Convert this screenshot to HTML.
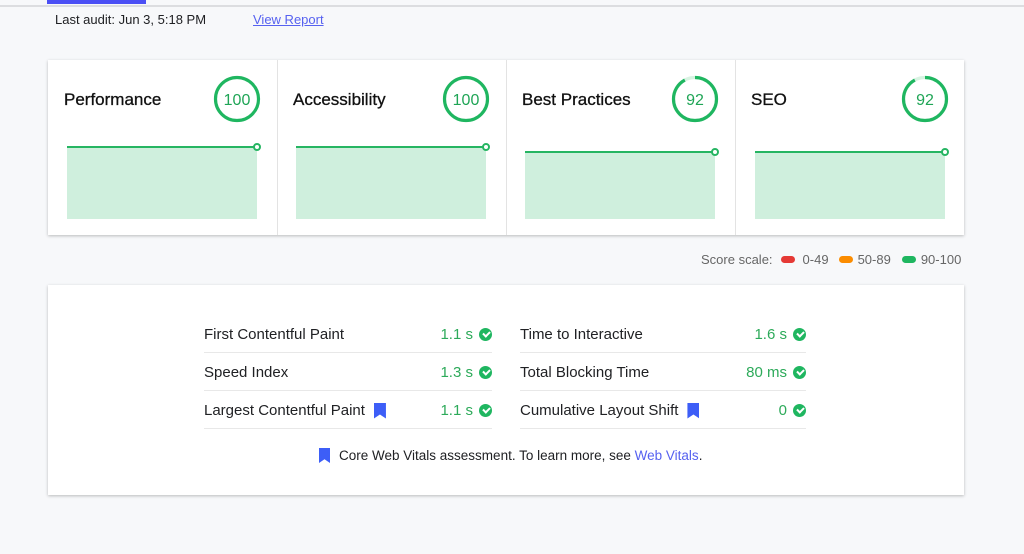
<!DOCTYPE html>
<html><head><style>
*{margin:0;padding:0;box-sizing:border-box}
body{width:1024px;height:554px;background:#f7f8fa;font-family:"Liberation Sans",sans-serif;position:relative;overflow:hidden;color:#202124}
.abs{position:absolute}
.card{background:#fff;box-shadow:0 1px 3px rgba(0,0,0,.25)}
.t{font-size:17px;color:#111;-webkit-text-stroke:0.3px #111}
.row{position:absolute;height:38px;border-bottom:1px solid #e8e8e8;font-size:15px;display:flex;align-items:center;padding-top:2px}
.row .v{margin-left:auto;color:#2daa5a;display:flex;align-items:center;gap:6px}
.ck{width:13px;height:13px;border-radius:50%;background:#1fb660;display:inline-block;position:relative}
.ck:after{content:"";position:absolute;left:3.5px;top:3px;width:5px;height:3px;border-left:2px solid #fff;border-bottom:2px solid #fff;transform:rotate(-45deg)}
.bm{display:inline-block;width:12px;height:16px;background:#3d5ef7;clip-path:polygon(0 0,100% 0,100% 100%,50% 75%,0 100%);margin-left:9px}
</style></head><body>
<div class="abs" style="left:0;top:5px;width:1024px;height:2px;background:#dcdde0"></div>
<div class="abs" style="left:47px;top:0;width:99px;height:4px;background:#4b4ff5"></div>
<div class="abs" style="left:55px;top:12px;font-size:13px">Last audit: Jun 3, 5:18 PM</div>
<div class="abs" style="left:253px;top:12px;font-size:13px;color:#5661f0;text-decoration:underline">View Report</div>

<div class="abs card" style="left:48px;top:60px;width:916px;height:175px"></div>
<div class="abs" style="left:277px;top:60px;width:1px;height:175px;background:#e3e3e3"></div>
<div class="abs" style="left:506px;top:60px;width:1px;height:175px;background:#e3e3e3"></div>
<div class="abs" style="left:735px;top:60px;width:1px;height:175px;background:#e3e3e3"></div>

<div class="abs t" style="left:64px;top:90px">Performance</div>
<div class="abs t" style="left:293px;top:90px">Accessibility</div>
<div class="abs t" style="left:522px;top:90px">Best Practices</div>
<div class="abs t" style="left:751px;top:90px">SEO</div>

<svg class="abs" style="left:0;top:0" width="1024" height="240">
<g fill="none" stroke-width="3.2">
<circle cx="237" cy="99" r="21.5" stroke="#1fb660"/>
<circle cx="466" cy="99" r="21.5" stroke="#1fb660"/>
<circle cx="695" cy="99" r="21.5" stroke="#d8f3e2"/>
<circle cx="695" cy="99" r="21.5" stroke="#1fb660" stroke-dasharray="124.3 135.1" transform="rotate(-90 695 99)"/>
<circle cx="925" cy="99" r="21.5" stroke="#d8f3e2"/>
<circle cx="925" cy="99" r="21.5" stroke="#1fb660" stroke-dasharray="124.3 135.1" transform="rotate(-90 925 99)"/>
</g>
<g font-family="Liberation Sans" font-size="16" fill="#1fa556" text-anchor="middle">
<text x="237" y="105">100</text><text x="466" y="105">100</text><text x="695" y="105">92</text><text x="925" y="105">92</text>
</g>
<g fill="#cfefdd">
<rect x="67" y="147" width="190" height="72"/><rect x="296" y="147" width="190" height="72"/>
<rect x="525" y="152" width="190" height="67"/><rect x="755" y="152" width="190" height="67"/>
</g>
<g stroke="#26b562" stroke-width="2" fill="#fff">
<line x1="67" y1="147" x2="257" y2="147"/><circle cx="257" cy="147" r="3"/>
<line x1="296" y1="147" x2="486" y2="147"/><circle cx="486" cy="147" r="3"/>
<line x1="525" y1="152" x2="715" y2="152"/><circle cx="715" cy="152" r="3"/>
<line x1="755" y1="152" x2="945" y2="152"/><circle cx="945" cy="152" r="3"/>
</g>
</svg>

<div class="abs" style="left:701px;top:252px;font-size:13px;color:#666;display:flex;align-items:center;white-space:nowrap">Score scale:
<span style="display:inline-block;width:14px;height:7px;border-radius:4px;background:#e53935;margin:0 8px"></span>0-49
<span style="display:inline-block;width:14px;height:7px;border-radius:4px;background:#fb8c00;margin:0 5px 0 10px"></span>50-89
<span style="display:inline-block;width:14px;height:7px;border-radius:4px;background:#1fb660;margin:0 5px 0 11px"></span>90-100</div>

<div class="abs card" style="left:48px;top:285px;width:916px;height:210px"></div>
<div class="row" style="left:204px;top:315px;width:288px">First Contentful Paint<span class="v">1.1 s <i class="ck"></i></span></div>
<div class="row" style="left:204px;top:353px;width:288px">Speed Index<span class="v">1.3 s <i class="ck"></i></span></div>
<div class="row" style="left:204px;top:391px;width:288px">Largest Contentful Paint<i class="bm"></i><span class="v">1.1 s <i class="ck"></i></span></div>
<div class="row" style="left:520px;top:315px;width:286px">Time to Interactive<span class="v">1.6 s <i class="ck"></i></span></div>
<div class="row" style="left:520px;top:353px;width:286px">Total Blocking Time<span class="v">80 ms <i class="ck"></i></span></div>
<div class="row" style="left:520px;top:391px;width:286px">Cumulative Layout Shift<i class="bm"></i><span class="v">0 <i class="ck"></i></span></div>
<div class="abs" style="left:319px;top:448px;font-size:13.5px;display:flex;align-items:center;white-space:nowrap"><i class="bm" style="margin:0 9px 0 0;width:11px;height:15px"></i>Core Web Vitals assessment. To learn more, see&nbsp;<span style="color:#5661f0">Web Vitals</span>.</div>
</body></html>
